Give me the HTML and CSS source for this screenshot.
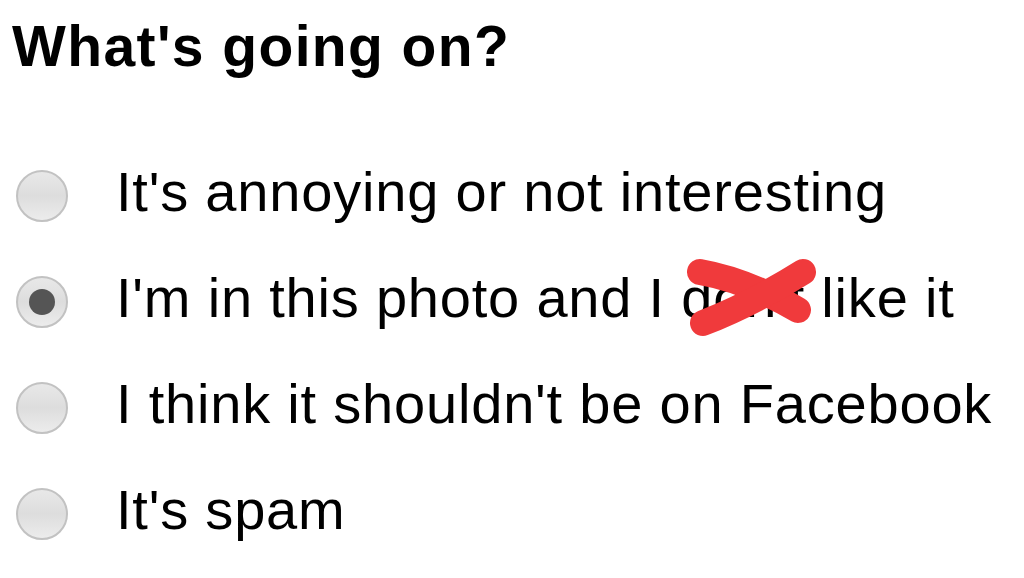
FILE: index.html
```html
<!DOCTYPE html>
<html lang="en">
<head>
<meta charset="utf-8">
<title>What's going on?</title>
<link rel="stylesheet" href="styles.css">
</head>
<body>
<div class="page">
  <h1 class="title">What's going on?</h1>
  <div class="options">
    <label class="option">
      <span class="radio"></span>
      <span class="label">It's annoying or not interesting</span>
    </label>
    <label class="option">
      <span class="radio checked"><span class="dot"></span></span>
      <span class="label crossed">I'm in this photo and I don't like it
        <svg class="cross" width="130" height="84" viewBox="0 0 130 84">
          <path d="M10 14 Q56 22 108 52" />
          <path d="M13 65 Q62 46 113 14" />
        </svg>
      </span>
    </label>
    <label class="option">
      <span class="radio"></span>
      <span class="label">I think it shouldn't be on Facebook</span>
    </label>
    <label class="option">
      <span class="radio"></span>
      <span class="label">It's spam</span>
    </label>
  </div>
</div>
</body>
</html>
```

FILE: styles.css
```css
html, body {
  margin: 0;
  padding: 0;
  background: #ffffff;
}
.page {
  font-family: "Liberation Sans", Arial, sans-serif;
  color: #000;
  padding: 18px 0 0 12px;
}
.title {
  margin: 0 0 64px 0;
  font-size: 57px;
  line-height: 57px;
  font-weight: bold;
  letter-spacing: 1.4px;
}
.options {
  display: flex;
  flex-direction: column;
}
.option {
  display: flex;
  align-items: center;
  height: 106px;
}
.radio {
  box-sizing: border-box;
  width: 52px;
  height: 52px;
  margin-left: 4px;
  margin-top: 7px;
  border-radius: 50%;
  border: 2px solid #c2c2c2;
  background: linear-gradient(#e8e8e8, #dddddd 50%, #ececec);
  display: flex;
  align-items: center;
  justify-content: center;
  flex: none;
}
.dot {
  width: 26px;
  height: 26px;
  border-radius: 50%;
  background: #555555;
}
.label {
  margin-left: 48px;
  font-size: 56px;
  line-height: 106px;
  letter-spacing: 0.8px;
  white-space: nowrap;
  position: relative;
}
.cross {
  position: absolute;
  left: 574px;
  top: 13px;
  overflow: visible;
}
.cross path {
  fill: none;
  stroke: #f03a3c;
  stroke-width: 26;
  stroke-linecap: round;
}
```
